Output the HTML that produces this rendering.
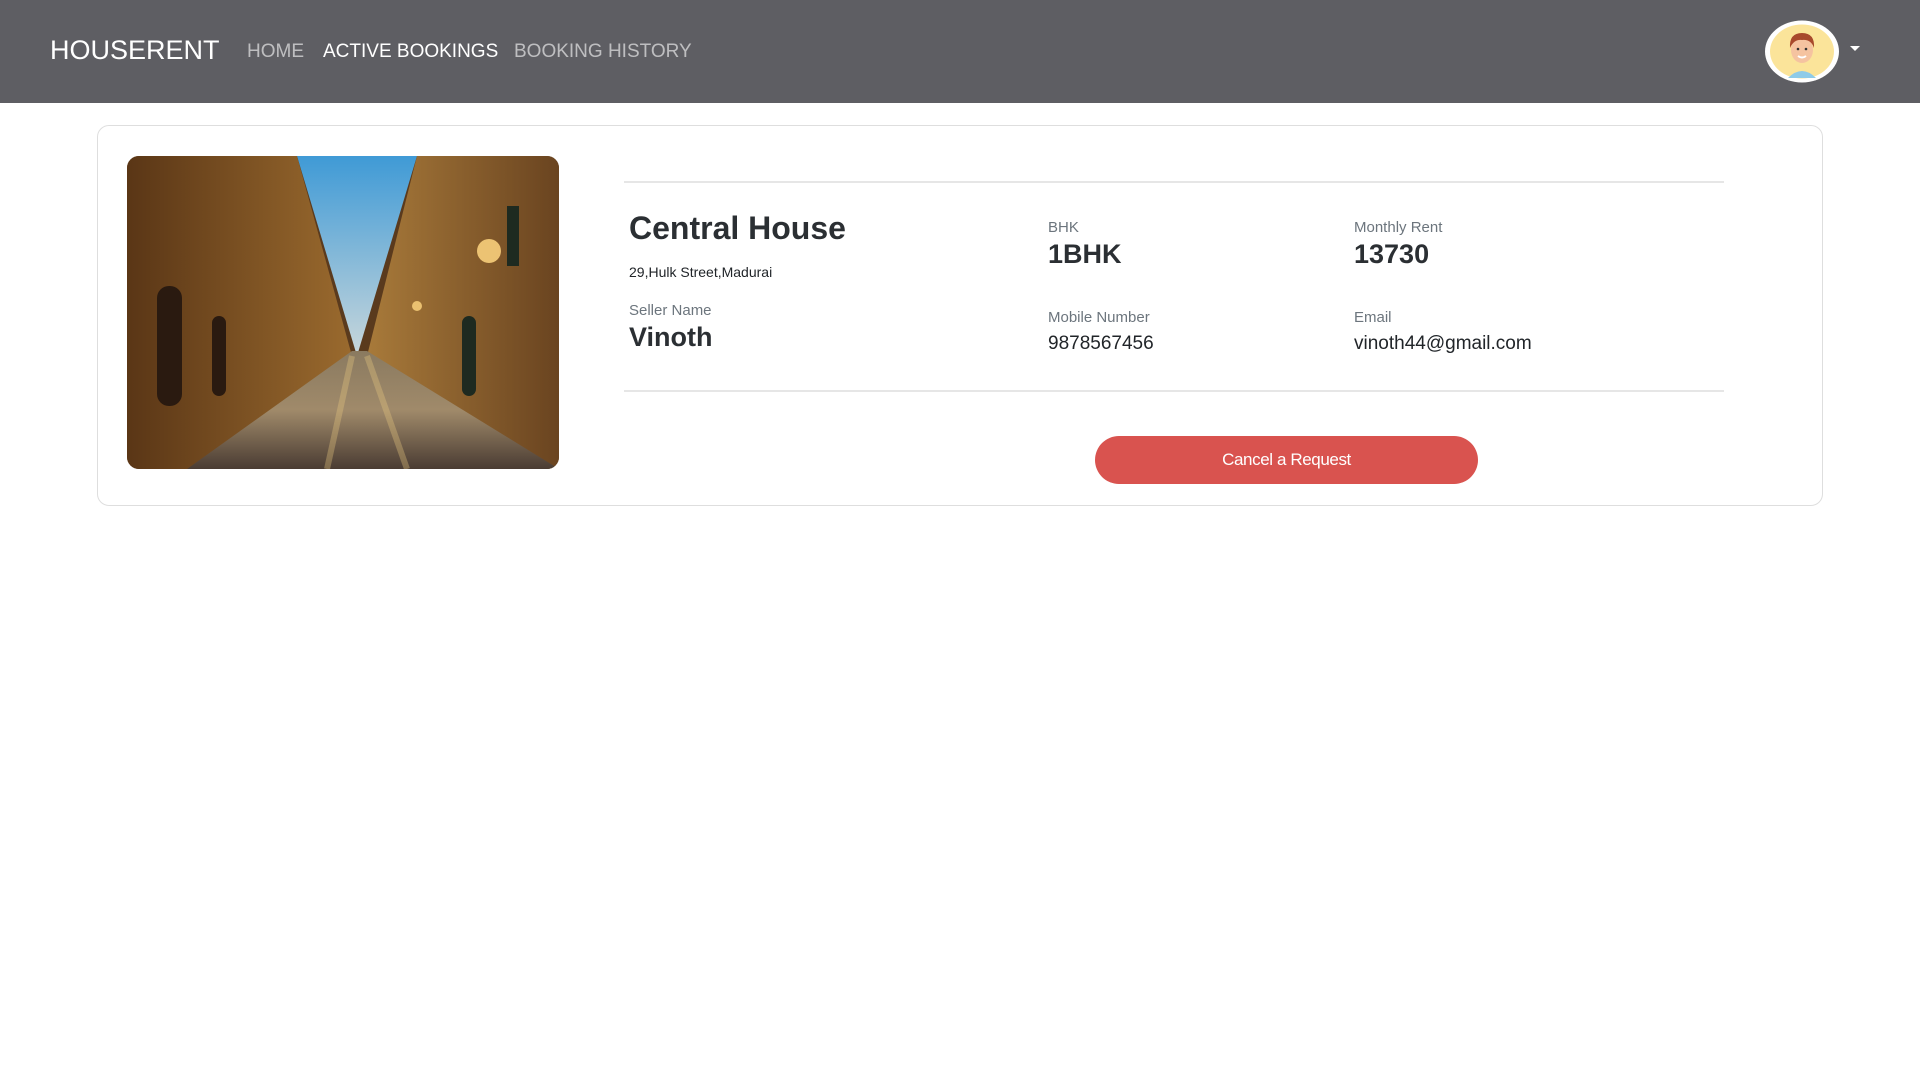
<!DOCTYPE html>
<html><head><meta charset="utf-8"><style>
*{margin:0;padding:0;box-sizing:border-box}
body{width:1920px;height:1080px;background:#fff;font-family:"Liberation Sans",Arial,sans-serif;position:relative;overflow:hidden;color:#212529}
.nav{position:absolute;left:0;top:0;width:1920px;height:103px;background:#5e5e63}
.a{position:absolute;white-space:nowrap}
.card{position:absolute;left:97px;top:125px;width:1726px;height:381px;border:1px solid #dedede;border-radius:12px}
.img{position:absolute;left:127px;top:156px;width:432px;height:313px;border-radius:12px;overflow:hidden}
.hr{position:absolute;left:624px;width:1100px;height:2px;background:#e6e6e6}
.lbl{font-size:15px;color:#6c757d}
.btn{position:absolute;left:1095px;top:436px;width:383px;height:48px;border-radius:24px;background:#d9534f;color:#fff;font-size:17px;letter-spacing:-0.4px;text-align:center;line-height:48px}
</style></head><body>
<div class="nav"></div>
<div class="a" style="left:50px;top:35px;font-size:27px;color:#fff">HOUSERENT</div>
<div class="a" style="left:247px;top:41px;font-size:19px;color:rgba(255,255,255,.6)">HOME</div>
<div class="a" style="left:323px;top:41px;font-size:19px;color:#fff">ACTIVE BOOKINGS</div>
<div class="a" style="left:514px;top:41px;font-size:19px;color:rgba(255,255,255,.6)">BOOKING HISTORY</div>
<svg class="a" style="left:1764px;top:20px" width="76" height="63" viewBox="0 0 76 63">
<ellipse cx="38" cy="31.5" rx="37" ry="31" fill="#fff"/>
<ellipse cx="38" cy="31.5" rx="32" ry="27" fill="#fbe49a"/>
<path d="M24 58 Q38 44 52 58 Z" fill="#8fcbe8"/>
<ellipse cx="38" cy="30" rx="11" ry="13" fill="#f5c3a0"/>
<path d="M26 28 Q25 13 38 13 Q51 13 50 28 Q47 19 38 20 Q30 19 26 28Z" fill="#a8492c"/>
<circle cx="34" cy="29" r="1.3" fill="#333"/><circle cx="42" cy="29" r="1.3" fill="#333"/>
<path d="M34 36 Q38 39 42 36" stroke="#fff" stroke-width="2" fill="none"/>
</svg>
<div class="a" style="left:1850px;top:46px;width:0;height:0;border-left:5px solid transparent;border-right:5px solid transparent;border-top:5px solid #fff"></div>
<div class="card"></div>
<div class="img"><svg width="432" height="313" viewBox="0 0 432 313">
<defs><linearGradient id="s" x1="0" y1="0" x2="0" y2="1"><stop offset="0" stop-color="#3f9ad6"/><stop offset="1" stop-color="#c9d7db"/></linearGradient>
<linearGradient id="g" x1="0" y1="0" x2="0" y2="1"><stop offset="0" stop-color="#8a7a60"/><stop offset=".5" stop-color="#a08a6a"/><stop offset="1" stop-color="#4a3c33"/></linearGradient>
<linearGradient id="l" x1="0" y1="0" x2="1" y2="0"><stop offset="0" stop-color="#5a3616"/><stop offset="1" stop-color="#9a6a2e"/></linearGradient>
<linearGradient id="r" x1="1" y1="0" x2="0" y2="0"><stop offset="0" stop-color="#6a4420"/><stop offset="1" stop-color="#a87a3a"/></linearGradient></defs>
<rect width="432" height="313" fill="#5a3a1d"/>
<path d="M170 0 H290 L230 200 Z" fill="url(#s)"/>
<path d="M0 0 H170 L225 200 L160 313 H0Z" fill="url(#l)"/>
<path d="M290 0 H432 V313 H300 L240 200Z" fill="url(#r)"/>
<path d="M60 313 L225 195 L240 195 L432 313Z" fill="url(#g)"/>
<circle cx="362" cy="95" r="12" fill="#ffd680" opacity=".85"/>
<circle cx="290" cy="150" r="5" fill="#ffd680" opacity=".8"/>
<rect x="30" y="130" width="25" height="120" rx="12" fill="#2a1a10"/>
<rect x="85" y="160" width="14" height="80" rx="7" fill="#2a1a10"/>
<rect x="335" y="160" width="14" height="80" rx="7" fill="#1e2a20"/>
<rect x="380" y="50" width="12" height="60" fill="#1e2a20"/>
<path d="M225 200 L200 313 M240 200 L280 313" stroke="#e8c880" stroke-width="6" opacity=".35"/>
</svg></div>
<div class="hr" style="top:181px"></div>
<div class="hr" style="top:390px"></div>
<div class="a" style="left:629px;top:210px;font-size:32px;font-weight:bold;color:#2b2f33">Central House</div>
<div class="a" style="left:629px;top:264px;font-size:14px">29,Hulk Street,Madurai</div>
<div class="a lbl" style="left:629px;top:302px">Seller Name</div>
<div class="a" style="left:629px;top:322px;font-size:27px;font-weight:bold;color:#2b2f33">Vinoth</div>
<div class="a lbl" style="left:1048px;top:219px">BHK</div>
<div class="a" style="left:1048px;top:239px;font-size:27px;font-weight:bold;color:#2b2f33">1BHK</div>
<div class="a lbl" style="left:1354px;top:219px">Monthly Rent</div>
<div class="a" style="left:1354px;top:239px;font-size:27px;font-weight:bold;color:#2b2f33">13730</div>
<div class="a lbl" style="left:1048px;top:309px">Mobile Number</div>
<div class="a" style="left:1048px;top:333px;font-size:19px">9878567456</div>
<div class="a lbl" style="left:1354px;top:309px">Email</div>
<div class="a" style="left:1354px;top:333px;font-size:19px">vinoth44@gmail.com</div>
<div class="btn">Cancel a Request</div>
</body></html>
